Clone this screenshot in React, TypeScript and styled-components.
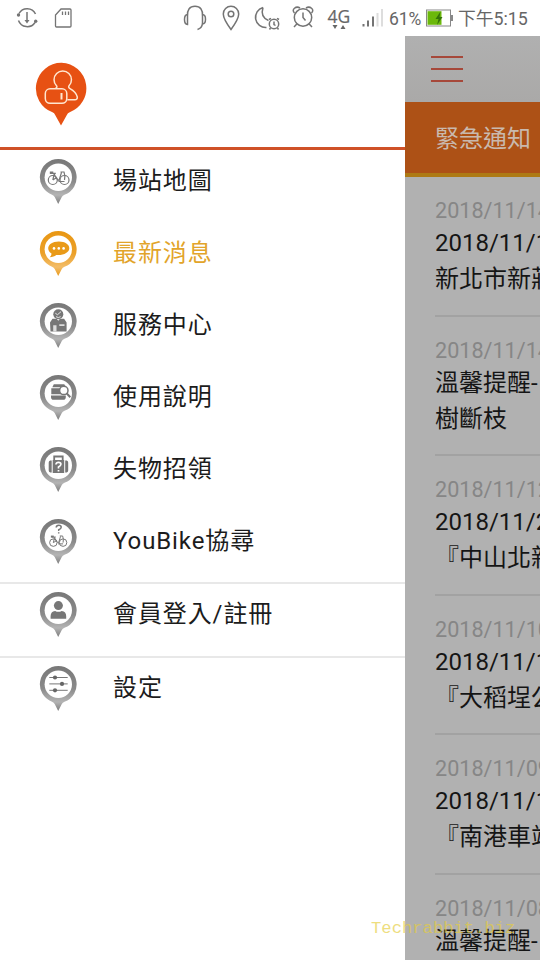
import React from 'react';
import styled, { createGlobalStyle } from 'styled-components';

const GlobalStyle = createGlobalStyle`
  * { box-sizing: border-box; }
  body { margin: 0; background: #fff; font-family: Roboto, "Noto Sans CJK TC", sans-serif; }
`;

const Screen = styled.div`
  position: relative;
  width: 540px;
  height: 960px;
  overflow: hidden;
  display: flex;
  flex-direction: column;
  background: #fff;
`;

const StatusBar = styled.header`
  flex: none;
  height: 36px;
  display: flex;
  align-items: center;
  color: #666;
  white-space: nowrap;
`;

const StatusIcons = styled.svg`
  flex: none;
  width: 388px;
  height: 36px;
`;

const Percent = styled.span`
  width: 37px;
  font-size: 17.5px;
  margin-left: 1px;
  padding-top: 1px;
  letter-spacing: -0.1px;
`;

const Battery = styled.svg`
  width: 28px;
  height: 36px;
`;

const Clock = styled.span`
  margin-left: 4px;
  font-size: 17.8px;
  line-height: 37px;
  height: 36px;
`;

const Body = styled.div`
  flex: 1;
  min-height: 0;
  display: flex;
`;

const Drawer = styled.nav`
  flex: none;
  width: 405px;
  display: flex;
  flex-direction: column;
`;

const Brand = styled.div`
  height: 114px;
  flex: none;
  padding: 26px 0 0 35px;
  border-bottom: 3px solid #cf5128;
`;

const Group = styled.div<{ $top: number; $height: number; $ruled?: boolean }>`
  flex: none;
  height: ${p => p.$height}px;
  padding-top: ${p => p.$top}px;
  border-top: ${p => (p.$ruled ? '2px solid #e8e8e8' : 'none')};
`;

const Item = styled.a<{ $active?: boolean }>`
  display: flex;
  height: 72px;
  padding-left: 39px;
  gap: 36px;
  color: ${p => (p.$active ? '#e2a42a' : '#1c1c1c')};
  font-size: 24px;
  line-height: 45px;
  letter-spacing: 0.9px;
  white-space: nowrap;
`;

const PinSvg = styled.svg`
  flex: none;
  width: 38px;
  height: 46px;
`;

const Page = styled.main`
  flex: 1;
  min-width: 0;
  overflow: hidden;
  background: #b1b1b1;
`;

const TopBar = styled.div`
  height: 66px;
  padding: 20px 0 0 26px;
  background: linear-gradient(#b0b0b0, #aaa9a8);
`;

const MenuButton = styled.div`
  width: 32px;
  height: 26px;
  display: flex;
  flex-direction: column;
  justify-content: space-between;
`;

const MenuLine = styled.span`
  height: 2px;
  background: #a6483a;
`;

const Tab = styled.div`
  height: 75px;
  padding-left: 30px;
  border-bottom: 4px solid #ae7a14;
  background: #ad5116;
  color: #c9b9ae;
  font-size: 24px;
  line-height: 75px;
  white-space: nowrap;
`;

const News = styled.article`
  height: 139.6px;
  margin-left: 30px;
  padding-top: 21px;
  border-bottom: 2px solid #a2a2a2;
  white-space: nowrap;
`;

const NewsDate = styled.div`
  height: 26px;
  font-size: 21.6px;
  line-height: 26px;
  color: #868686;
`;

const NewsTitle = styled.div`
  height: 35px;
  margin-top: 1px;
  font-size: 24px;
  line-height: 36px;
  color: #151515;
`;

const Watermark = styled.div`
  position: absolute;
  left: 371px;
  top: 919px;
  font: 17.2px/20px "Liberation Mono", monospace;
  color: #e6cd3c;
  opacity: 0.65;
`;

type Kind = 'bike' | 'chat' | 'center' | 'guide' | 'lost' | 'find' | 'user' | 'settings';

const Bike = () => (
  <g fill="none" stroke="#777" strokeWidth="1.2">
    <circle cx="13.8" cy="21" r="4.5" />
    <circle cx="25.5" cy="21" r="4.5" />
    <path d="M13.800 21L15.300 14.500M12.300 14.300h4.500M15.300 15q1.500 5 4.700 6.500L22.500 13.500M21.500 13h3.500q1.500 4 .5 8M19.500 22.500h6M13.800 21l4-2.500" />
    <path d="M10.800 12.500h3.500v2.500h-3.500z" fill="#777" stroke="none" />
  </g>
);

const Glyph = ({ kind }: { kind: Kind }) => {
  switch (kind) {
    case 'bike':
      return <Bike />;
    case 'chat':
      return (
        <>
          <path d="M19.800 10.500C13.300 10.500 9.200 13.500 9.200 17.300c0 2.300 1.200 4 3.300 5.200 0 1.500-.6 2.600-1.800 3.700 2.800 0 5-.8 6.500-2.200 7.400.6 13.100-2.400 13.100-6.700 0-4-4.200-6.800-10.500-6.800z" fill="#e99a18" />
          <g fill="#fff"><circle cx="15" cy="17.4" r="1.3" /><circle cx="19.8" cy="17.4" r="1.3" /><circle cx="24.6" cy="17.4" r="1.3" /></g>
        </>
      );
    case 'center':
      return (
        <g fill="#777">
          <circle cx="19.3" cy="11.2" r="5" />
          <path d="M16.300 10.200l2.200 1.500 3.500-3M17 13.700q2.300 1.700 4.600 0" fill="none" stroke="#fff" strokeWidth=".8" />
          <path d="M11 19.500l2.500-3.700h4.200l1.600 1.900 1.600-1.900h4.200L27.600 19.500V28.500H11.500z" />
          <path d="M14.200 22.300h3.300v6.200h-3.300zM20.300 21.200h5.200v1.800h-5.200z" fill="#ddd" />
        </g>
      );
    case 'guide':
      return (
        <g fill="#777" transform="translate(.8 -1.8)">
          <path d="M14 11h10.500L26 14H12.500z" />
          <path d="M11.500 15h11v6h-11zM11.200 22.300H26v1.400q0 2.800-2.500 2.800h-9.800q-2.500 0-2.500-2.800z" />
          <circle cx="24" cy="17.2" r="4.2" fill="#fff" stroke="#777" strokeWidth="1.5" />
          <path d="M26.800 20l3.700 4" stroke="#777" strokeWidth="2" />
        </g>
      );
    case 'lost':
      return (
        <g fill="#777" transform="translate(.2 -1)">
          <path d="M15 14v-3.500h8.500V14" fill="none" stroke="#777" strokeWidth="1.8" />
          <path d="M13.500 14H25v13H13.500zM11 14.500h1.500v12H11q-1.500-.5-1.500-2v-8q0-1.500 1.500-2zM26 14.500h1.500q1.500.5 1.500 2v8q0 1.500-1.500 2H26z" />
          <path d="M16.700 18.500q.3-2.200 2.600-2.200 2.400 0 2.400 2 0 1.400-2.400 2.800v1.500M19.300 24v1.500" fill="none" stroke="#fff" strokeWidth="1.7" />
        </g>
      );
    case 'find':
      return (
        <>
          <g transform="translate(2.9 6.2) scale(.83)"><Bike /></g>
          <path d="M17.200 8.500q.2-2.200 2.500-2.200 2.500 0 2.500 1.900 0 1.500-2.500 2.500v1.200M19.700 13.200v1.400" fill="none" stroke="#777" strokeWidth="1.5" />
        </>
      );
    case 'user':
      return (
        <g fill="#777">
          <circle cx="19.4" cy="13.6" r="4.5" />
          <path d="M11.600 26.800v-2.500q0-4.800 4.500-5.300 3.300 1.700 6.600 0 4.500.5 4.500 5.300v2.500z" />
        </g>
      );
    case 'settings':
      return (
        <g stroke="#777" strokeWidth="1" fill="#666">
          <path d="M10.300 11.500h18.400M10.300 17.900h18.400M10.300 24.300h18.400" />
          <g stroke="none"><circle cx="16" cy="11.5" r="2.1" /><circle cx="23" cy="17.9" r="2.1" /><circle cx="16" cy="24.3" r="2.1" /></g>
        </g>
      );
  }
};

const Pin = ({ kind }: { kind: Kind }) => {
  const warm = kind === 'chat';
  const id = `pin-${kind}`;
  return (
    <PinSvg viewBox="0 0 38 46">
      <defs>
        <linearGradient id={id} x1="0" y1="0" x2="0" y2="1">
          <stop offset="0" stopColor={warm ? '#e99713' : '#787878'} />
          <stop offset=".5" stopColor={warm ? '#eba029' : '#8a8a8a'} />
          <stop offset=".8" stopColor={warm ? '#f3bd68' : '#b4b4b4'} />
          <stop offset="1" stopColor={warm ? '#e99a1c' : '#7c7c7c'} />
        </linearGradient>
      </defs>
      <path d="M19.300 0a18.400 18.400 0 0 0-6.300 35.700q2 .8 2.700 2.300L19.200 45l3.600-7q.7-1.500 2.700-2.300A18.400 18.400 0 0 0 19.300 0z" fill={`url(#${id})`} />
      <circle cx="19.3" cy="18.2" r="13.7" fill="#fff" />
      <Glyph kind={kind} />
    </PinSvg>
  );
};

const BrandLogo = () => (
  <svg width="53" height="64" viewBox="0 0 53 64">
    <path d="M26.600.800A25.500 25.500 0 0 0 17.500 50.200q1.800.7 2.800 3L26 63.500 31.700 53.200q1-2.300 3-3A25.500 25.500 0 0 0 26.600.800z" fill="#e75113" />
    <g fill="none" stroke="#ffe6cf" strokeWidth="1.5" strokeLinejoin="round">
      <path d="M20.500 26.300q2.200-1 1-2.500A8.700 8.700 0 1 1 34 23.800q-1 1.700 1 2.800 6 3.200 7.300 8.400.3 2.500-2.500 2.800h-7.500" />
      <rect x="10.3" y="26.8" width="21.5" height="14.5" rx="4.8" />
      <path d="M26.500 31v6.500" strokeWidth="2" />
    </g>
  </svg>
);

const MENU: { kind: Kind; label: string }[] = [
  { kind: 'bike', label: '場站地圖' },
  { kind: 'chat', label: '最新消息' },
  { kind: 'center', label: '服務中心' },
  { kind: 'guide', label: '使用說明' },
  { kind: 'lost', label: '失物招領' },
  { kind: 'find', label: 'YouBike協尋' },
];

const NEWS = [
  { date: '2018/11/14', lines: ['2018/11/1', '新北市新莊'] },
  { date: '2018/11/14', lines: ['溫馨提醒-', '樹斷枝'] },
  { date: '2018/11/12', lines: ['2018/11/2', '『中山北新'] },
  { date: '2018/11/10', lines: ['2018/11/1', '『大稻埕公'] },
  { date: '2018/11/09', lines: ['2018/11/1', '『南港車站'] },
  { date: '2018/11/08', lines: ['溫馨提醒-'] },
];

export default function App() {
  return (
    <Screen>
      <GlobalStyle />
      <StatusBar>
        <StatusIcons viewBox="0 0 388 36" fill="none" stroke="#747474" strokeWidth="1.5">
          <path d="M19 13.500A9.300 9.300 0 0 1 35.500 14M35 22.500A9.300 9.300 0 0 1 18.500 20.500M27 12v9" />
          <path d="M24.500 20h5L27 23.500z" fill="#747474" stroke="none" />
          <circle cx="18.5" cy="15" r="1.7" fill="#747474" stroke="none" /><circle cx="35.7" cy="21.2" r="1.7" fill="#747474" stroke="none" />
          <path d="M61 9h9q1 0 1 1v16q0 1-1 1H56.500q-1 0-1-1V15zM62.500 11.500v3.500M65.500 11.500v3.500M68.500 11.500v3.500" strokeWidth="1.3" />
          <path d="M187.500 16q-.5-9.700 7.500-9.700T202.500 16M202.500 23q-.3 5-5 6.500M187.500 14.500v10q-3-.2-3-5t3-5zM202.500 14.500v9.500q3-.2 3-4.800t-3-4.700z" />
          <path d="M231 29.500Q223.300 19 223.300 14a7.700 7.700 0 0 1 15.400 0Q238.700 19 231 29.500z" /><circle cx="231" cy="14" r="2.8" />
          <path d="M263 7.500A10.200 10.200 0 0 0 266.500 27.500M263 7.500Q260 17 268.500 20.500" />
          <circle cx="274" cy="24" r="4.7" /><path d="M274 21.500V24.500l1.500 1M269 19.500l2-1.200M279 19.500l-2-1.200M270.500 28l-1 1.500M277.500 28l1 1.500" />
          <circle cx="303" cy="17.5" r="8.7" /><path d="M303 12.500V17.500l2.500 3M296.800 24L294 27M309.200 24l2.800 3M294.500 13q-2.500-2.500 0-4.700t5.500-.3M311.500 13q2.500-2.500 0-4.700t-5.500-.3" />
          <path d="M332.500 25h5l-2.500 4zM340.500 29h5L343 25z" fill="#666" stroke="none" />
          <path d="M363.500 24v2.500M368 20.500v6M373 16.500v10" strokeWidth="2" /><path d="M377.500 13v13.500M382 9v17.500" stroke="#ddd" strokeWidth="2" />
          <text x="327.5" y="22.800" fontFamily="Open Sans" fontSize="17.5" fill="#666" stroke="#666" strokeWidth=".2">4G</text>
        </StatusIcons>
        <Percent>61%</Percent>
        <Battery viewBox="0 0 28 36">
          <rect x=".5" y="10" width="24" height="16" fill="#fff" stroke="#888" />
          <path d="M1.500 11.200h14v13.600h-14z" fill="#6bb80b" />
          <path d="M14.500 11.500L9.500 19h3l-1.500 6 5.500-8h-3z" fill="#34720a" />
          <path d="M26 15v6" stroke="#888" strokeWidth="2" />
        </Battery>
        <Clock>下午5:15</Clock>
      </StatusBar>
      <Body>
        <Drawer>
          <Brand><BrandLogo /></Brand>
          <Group $top={9} $height={432}>
            {MENU.map(m => (
              <Item key={m.label} $active={m.kind === 'chat'}>
                <Pin kind={m.kind} />
                {m.label}
              </Item>
            ))}
          </Group>
          <Group $top={8} $height={74} $ruled>
            <Item><Pin kind="user" />會員登入/註冊</Item>
          </Group>
          <Group $top={8} $height={74} $ruled>
            <Item><Pin kind="settings" />設定</Item>
          </Group>
        </Drawer>
        <Page>
          <TopBar>
            <MenuButton><MenuLine /><MenuLine /><MenuLine /></MenuButton>
          </TopBar>
          <Tab>緊急通知</Tab>
          {NEWS.map((n, i) => (
            <News key={i}>
              <NewsDate>{n.date}</NewsDate>
              {n.lines.map(l => <NewsTitle key={l}>{l}</NewsTitle>)}
            </News>
          ))}
        </Page>
      </Body>
      <Watermark>Techrabbit.biz</Watermark>
    </Screen>
  );
}
